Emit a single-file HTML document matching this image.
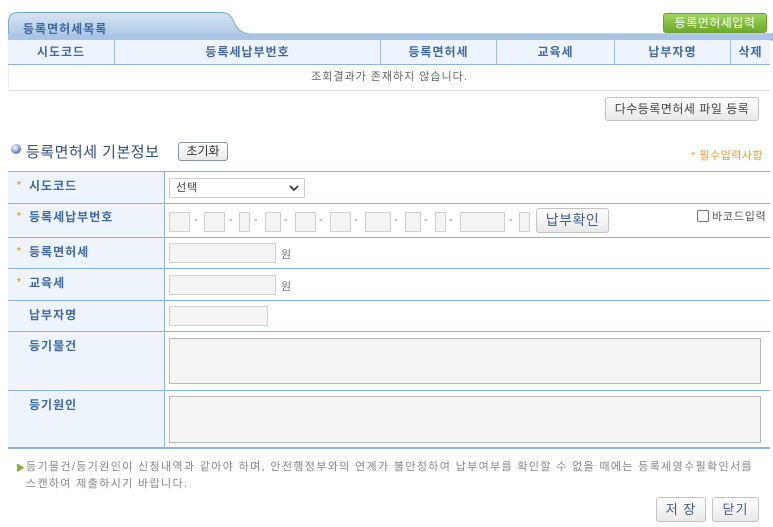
<!DOCTYPE html><html><head><meta charset="utf-8"><style>
*{box-sizing:border-box;margin:0;padding:0}
body{width:773px;height:527px;background:#fff;position:relative;overflow:hidden;font-family:"Liberation Sans","Noto Sans CJK KR",sans-serif;font-size:12px;color:#333;letter-spacing:1px}
.a{position:absolute}
.hd{color:#3f6aa6;font-weight:bold;font-size:12px;text-align:center;line-height:25px;top:40px;height:25px;border-right:1px solid #9dbde6}
.btn{position:absolute;border:1px solid #c4c4c4;border-radius:3px;background:linear-gradient(#fff,#e9e9e9);color:#444;text-align:center;font-size:12px}
.row{position:absolute;left:8px;width:762px;border-bottom:1px solid #8db3e2}
.lab{position:absolute;left:0;top:0;bottom:0;width:157px;background:#eef4fc;border-right:1px solid #8db3e2;color:#3b69a5;font-weight:bold;font-size:12px;padding-left:21px}
.lab i{position:absolute;left:9px;color:#f39a1d;font-style:normal;font-size:10px}
.in{position:absolute;background:#f4f4f4;border:1px solid #cfcfcf}
.d{position:absolute;color:#777;font-size:11px}
</style></head><body>
<svg class="a" style="left:0;top:0" width="773" height="42">
<defs><linearGradient id="g" x1="0" y1="0" x2="0" y2="1"><stop offset="0" stop-color="#d6e4f3"/><stop offset="1" stop-color="#a9c4e5"/></linearGradient></defs>
<path d="M8.5 40 V22 Q8.5 12.5 18 12.5 H222 Q230 12.5 234 22 Q238 33 250 34 H773 V40 Z" fill="url(#g)" stroke="#7fa4d2"/>
<rect x="8" y="34" width="762" height="6" fill="#a9c4e5"/>
</svg>
<div class="a" style="left:23px;top:20px;color:#3a66a2;font-weight:bold;font-size:12px">등록면허세목록</div>
<div class="btn" style="left:663px;top:13px;width:104px;height:20px;background:linear-gradient(#9fd45a,#6bab2a);border-color:#6aa22b;color:#fff;line-height:18px;letter-spacing:0.5px">등록면허세입력</div>
<div class="a" style="left:8px;top:40px;width:762px;height:25px;background:#eef4fc;border-bottom:1px solid #8db3e2"></div>
<div class="a hd" style="left:8px;width:107px">시도코드</div>
<div class="a hd" style="left:115px;width:266px">등록세납부번호</div>
<div class="a hd" style="left:381px;width:116px">등록면허세</div>
<div class="a hd" style="left:497px;width:118px">교육세</div>
<div class="a hd" style="left:615px;width:116px">납부자명</div>
<div class="a hd" style="left:731px;width:39px;border:none">삭제</div>
<div class="a" style="left:8px;top:65px;width:762px;height:26px;border-bottom:1px solid #ddd;border-left:1px solid #eee;text-align:center;line-height:25px;color:#666;font-size:11px">조회결과가 존재하지 않습니다.</div>
<div class="btn" style="left:605px;top:97px;width:154px;height:24px;line-height:22px;letter-spacing:0.5px">다수등록면허세 파일 등록</div>
<div class="a" style="left:11px;top:144px;width:10px;height:10px;border-radius:50%;background:radial-gradient(circle at 40% 35%,#fff,#6d8fd0 60%,#3b5ea8)"></div>
<div class="a" style="left:26px;top:141px;font-size:15px;color:#2f4f86;letter-spacing:0.5px">등록면허세 기본정보</div>
<div class="btn" style="left:178px;top:142px;width:50px;height:19px;line-height:17px;border-color:#8896aa;color:#333;letter-spacing:0">초기화</div>
<div class="a" style="left:691px;top:147px;font-size:11px;color:#f39a1d;letter-spacing:0.5px">* 필수입력사항</div>
<div class="a" style="left:8px;top:171px;width:762px;border-top:1px solid #8db3e2"></div>
<div class="row" style="top:172px;height:32px"><div class="lab" style="line-height:28px"><i>*</i>시도코드</div></div>
<div class="row" style="top:204px;height:34px"><div class="lab" style="line-height:26px"><i>*</i>등록세납부번호</div></div>
<div class="row" style="top:238px;height:31px"><div class="lab" style="line-height:28px"><i>*</i>등록면허세</div></div>
<div class="row" style="top:269px;height:32px"><div class="lab" style="line-height:28px"><i>*</i>교육세</div></div>
<div class="row" style="top:301px;height:31px"><div class="lab" style="line-height:28px">납부자명</div></div>
<div class="row" style="top:332px;height:59px"><div class="lab" style="line-height:28px">등기물건</div></div>
<div class="row" style="top:391px;height:58px;border-bottom-width:2px"><div class="lab" style="line-height:28px">등기원인</div></div>
<div class="a" style="left:169px;top:178px;width:136px;height:20px;border:1px solid #ccc;background:#fff;padding-left:6px;line-height:18px;color:#444;font-size:11px">선택<svg style="position:absolute;right:5px;top:6px" width="10" height="7"><path d="M1 1 L5 5 L9 1" fill="none" stroke="#333" stroke-width="1.6"/></svg></div>
<div class="in" style="left:169px;top:212px;width:21px;height:20px"></div>
<div class="in" style="left:204px;top:212px;width:21px;height:20px"></div>
<div class="in" style="left:239px;top:212px;width:11px;height:20px"></div>
<div class="in" style="left:265px;top:212px;width:16px;height:20px"></div>
<div class="in" style="left:295px;top:212px;width:21px;height:20px"></div>
<div class="in" style="left:330px;top:212px;width:21px;height:20px"></div>
<div class="in" style="left:365px;top:212px;width:26px;height:20px"></div>
<div class="in" style="left:405px;top:212px;width:16px;height:20px"></div>
<div class="in" style="left:435px;top:212px;width:11px;height:20px"></div>
<div class="in" style="left:460px;top:212px;width:45px;height:20px"></div>
<div class="in" style="left:519px;top:212px;width:11px;height:20px"></div>
<div class="d" style="left:194px;top:214px">-</div><div class="d" style="left:229px;top:214px">-</div><div class="d" style="left:254px;top:214px">-</div><div class="d" style="left:284px;top:214px">-</div><div class="d" style="left:319px;top:214px">-</div><div class="d" style="left:354px;top:214px">-</div><div class="d" style="left:394px;top:214px">-</div><div class="d" style="left:424px;top:214px">-</div><div class="d" style="left:449px;top:214px">-</div><div class="d" style="left:509px;top:214px">-</div>
<div class="btn" style="left:536px;top:208px;width:73px;height:25px;line-height:23px;font-size:14px;color:#3a5f93;letter-spacing:0.5px">납부확인</div>
<div class="a" style="left:697px;top:210px;width:12px;height:12px;border:1px solid #777;border-radius:2px;background:#fff"></div>
<div class="a" style="left:712px;top:208px;font-size:11px;color:#555;letter-spacing:0.8px">바코드입력</div>
<div class="in" style="left:169px;top:243px;width:107px;height:20px"></div><div class="d" style="left:281px;top:246px">원</div>
<div class="in" style="left:169px;top:275px;width:107px;height:20px"></div><div class="d" style="left:281px;top:278px">원</div>
<div class="in" style="left:169px;top:306px;width:99px;height:20px"></div>
<div class="in" style="left:169px;top:338px;width:592px;height:46px;border-color:#bbb"></div>
<div class="in" style="left:169px;top:396px;width:592px;height:47px;border-color:#bbb"></div>
<div class="a" style="left:16px;top:461px;color:#7ab32f;font-size:9px">&#9654;</div>
<div class="a" style="left:26px;top:459px;width:745px;font-size:11px;line-height:17px;color:#888;letter-spacing:1.35px;white-space:nowrap">등기물건/등기원인이 신청내역과 같아야 하며, 안전행정부와의 연계가 불안정하여 납부여부를 확인할 수 없을 때에는 등록세영수필확인서를<br>스캔하여 제출하시기 바랍니다.</div>
<div class="btn" style="left:656px;top:497px;width:50px;height:25px;line-height:23px;font-size:13px;color:#3a5f93">저 장</div>
<div class="btn" style="left:712px;top:497px;width:47px;height:25px;line-height:23px;font-size:13px;color:#3a5f93">닫기</div>
</body></html>
